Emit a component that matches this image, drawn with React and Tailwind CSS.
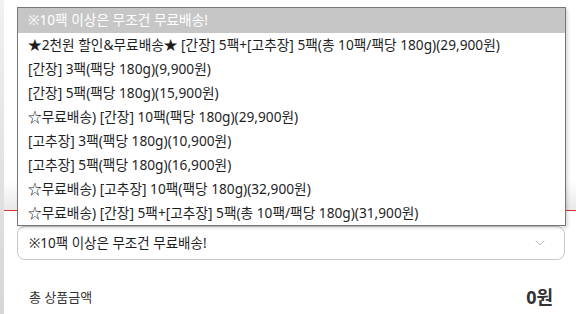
import { ChevronDown } from 'lucide-react'

const options = [
  '★2천원 할인&무료배송★ [간장] 5팩+[고추장] 5팩(총 10팩/팩당 180g)(29,900원)',
  '[간장] 3팩(팩당 180g)(9,900원)',
  '[간장] 5팩(팩당 180g)(15,900원)',
  '☆무료배송) [간장] 10팩(팩당 180g)(29,900원)',
  '[고추장] 3팩(팩당 180g)(10,900원)',
  '[고추장] 5팩(팩당 180g)(16,900원)',
  '☆무료배송) [고추장] 10팩(팩당 180g)(32,900원)',
  '☆무료배송) [간장] 5팩+[고추장] 5팩(총 10팩/팩당 180g)(31,900원)',
]

const App = () => {
  return (
    <div
      className="flex h-[314px] w-[576px] overflow-hidden bg-white text-[#1e1e1e]"
      style={{ fontFamily: '"Noto Sans", "Noto Sans CJK KR", sans-serif' }}
    >
      {/* left strip */}
      <div className="w-[4px] shrink-0 bg-gradient-to-b from-[#f1f1f1] to-[#d6d6d6]" />

      <div className="relative flex flex-1 flex-col">
        {/* tab bar behind the open list */}
        <div className="h-[211px] flex flex-col justify-end">
          <div className="h-[30px] border-b border-[#d9312b] bg-gradient-to-b from-white to-[#e8e8e8]" />
        </div>

        {/* select */}
        <div className="mt-[15px] pl-[13px] pr-[11px]">
          <div className="flex h-[34px] items-center justify-between rounded-[8px] border border-[#c8c8c8] pl-[11px] pr-[16px] text-[13.5px]">
            <span>※10팩 이상은 무조건 무료배송!</span>
            <ChevronDown className="h-[16px] w-[16px] text-[#bbb]" strokeWidth={1.5} />
          </div>
        </div>

        {/* total */}
        <div className="mt-[24px] flex items-center justify-between pl-[25px] pr-[23px]">
          <span className="text-[13px] text-[#333]">총 상품금액</span>
          <span className="text-[18px] font-bold text-[#333]">0원</span>
        </div>

        {/* open dropdown list */}
        <div className="absolute left-[13px] top-[7px] w-[549px] border border-[#777] bg-white text-[13.7px] leading-[24px] shadow-[2px_2px_3px_rgba(0,0,0,0.15)]">
          <div className="h-[25px] bg-[#c6c6c6] pl-[10px] text-white">※10팩 이상은 무조건 무료배송!</div>
          {options.map((o) => (
            <div key={o} className="h-[24px] pl-[10px]">
              {o}
            </div>
          ))}
        </div>
      </div>
    </div>
  )
}

export default App
